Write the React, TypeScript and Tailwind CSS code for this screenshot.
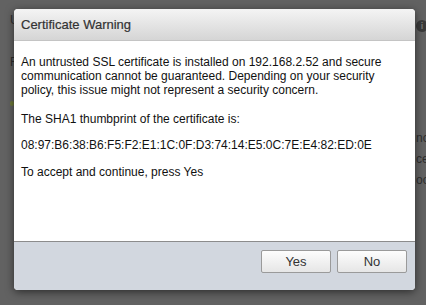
import React from 'react'

export default function App() {
  return (
    <div
      className="relative w-[426px] h-[305px] overflow-hidden bg-[#626262] text-[#222]"
      style={{ fontFamily: '"Liberation Sans", Arial, sans-serif' }}
    >
      {/* page behind the modal overlay */}
      <div className="flex justify-between h-full">
        <div className="flex flex-col pl-[10px] pt-[13px] text-[12px] text-[#2e2e2e] leading-[14px]">
          <span>U</span>
          <span className="mt-[28px]">F</span>
          <span className="mt-[32px] w-[4px] h-[5px] bg-[#6f7a3a] rounded-sm" />
        </div>
        <div className="flex flex-col items-start w-[10px] pt-[20px] text-[12px] text-[#2e2e2e] leading-[14px]">
          <div className="w-[12px] h-[12px] rounded-full bg-[#3a3a3a] flex items-center justify-center text-[9px] font-bold text-[#777]">
            i
          </div>
          <span className="mt-[99px]">nc</span>
          <span className="mt-[7px]">ce</span>
          <span className="mt-[7px]">oo</span>
        </div>
      </div>

      {/* dialog */}
      <div className="absolute left-[14px] top-[9px] w-[401px] h-[281px] flex flex-col rounded-[4px] overflow-hidden shadow-[0_2px_8px_rgba(0,0,0,0.55)] bg-white">
        <div className="h-[32px] shrink-0 flex items-center px-[7px] bg-gradient-to-b from-[#f4f4f4] to-[#d5d5d5] border-b border-[#c4c4c4]">
          <span className="text-[13px] text-[#333] [-webkit-text-stroke:0.2px_#333]">Certificate Warning</span>
        </div>
        <div className="flex-1 px-[7px] pt-[14px] text-[12px] leading-[14px] text-[#111]">
          <p>
            An untrusted SSL certificate is installed on 192.168.2.52 and secure communication cannot be guaranteed.
            Depending on your security policy, this issue might not represent a security concern.
          </p>
          <p className="mt-[15px]">The SHA1 thumbprint of the certificate is:</p>
          <p className="mt-[12px]">08:97:B6:38:B6:F5:F2:E1:1C:0F:D3:74:14:E5:0C:7E:E4:82:ED:0E</p>
          <p className="mt-[13px]">To accept and continue, press Yes</p>
        </div>
        <div className="h-[49px] shrink-0 flex justify-end items-start gap-[6px] pt-[8px] pr-[8px] bg-[#d2d7df] border-t border-[#8c8c8c]">
          <button className="w-[70px] h-[23px] rounded-[2px] border border-[#9a9a9a] bg-gradient-to-b from-[#fdfdfd] to-[#e6e6e6] text-[13px] text-[#333]">
            Yes
          </button>
          <button className="w-[70px] h-[23px] rounded-[2px] border border-[#9a9a9a] bg-gradient-to-b from-[#fdfdfd] to-[#e6e6e6] text-[13px] text-[#333]">
            No
          </button>
        </div>
      </div>
    </div>
  )
}
